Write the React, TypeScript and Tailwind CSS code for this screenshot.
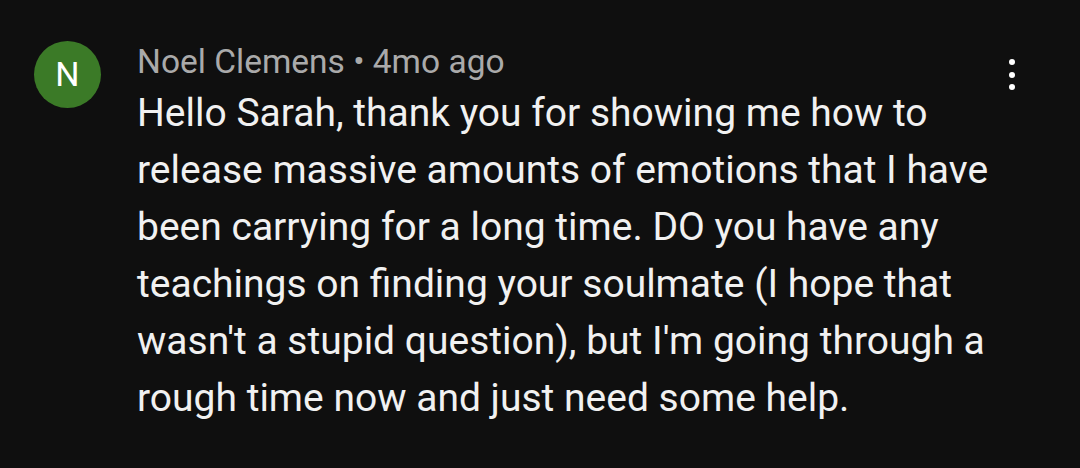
export default function App() {
  return (
    <div className="h-[468px] w-[1080px] bg-[#0f0f0f] font-['Roboto',sans-serif] overflow-hidden">
      <div className="flex pl-[34px] pr-[40px] pt-[41px]">
        <div className="flex h-[67px] w-[67px] shrink-0 items-center justify-center rounded-full bg-[#3b7a27] text-[34px] text-white">
          N
        </div>
        <div className="ml-[36px] flex-1">
          <div className="flex items-start justify-between">
            <p className="text-[33.5px] leading-[42px] text-[#aaaaaa]">
              Noel Clemens • 4mo ago
            </p>
            <div className="mr-[25px] mt-[18px] flex flex-col gap-[6.5px]">
              <span className="h-[6px] w-[6px] rounded-full bg-white" />
              <span className="h-[6px] w-[6px] rounded-full bg-white" />
              <span className="h-[6px] w-[6px] rounded-full bg-white" />
            </div>
          </div>
          <p className="mt-[-5px] text-[39px] leading-[57px] text-[#f1f1f1]">
            Hello Sarah, thank you for showing me how to<br />
            release massive amounts of emotions that I have<br />
            been carrying for a long time. DO you have any<br />
            teachings on finding your soulmate (I hope that<br />
            wasn't a stupid question), but I'm going through a<br />
            rough time now and just need some help.
          </p>
        </div>
      </div>
    </div>
  );
}
